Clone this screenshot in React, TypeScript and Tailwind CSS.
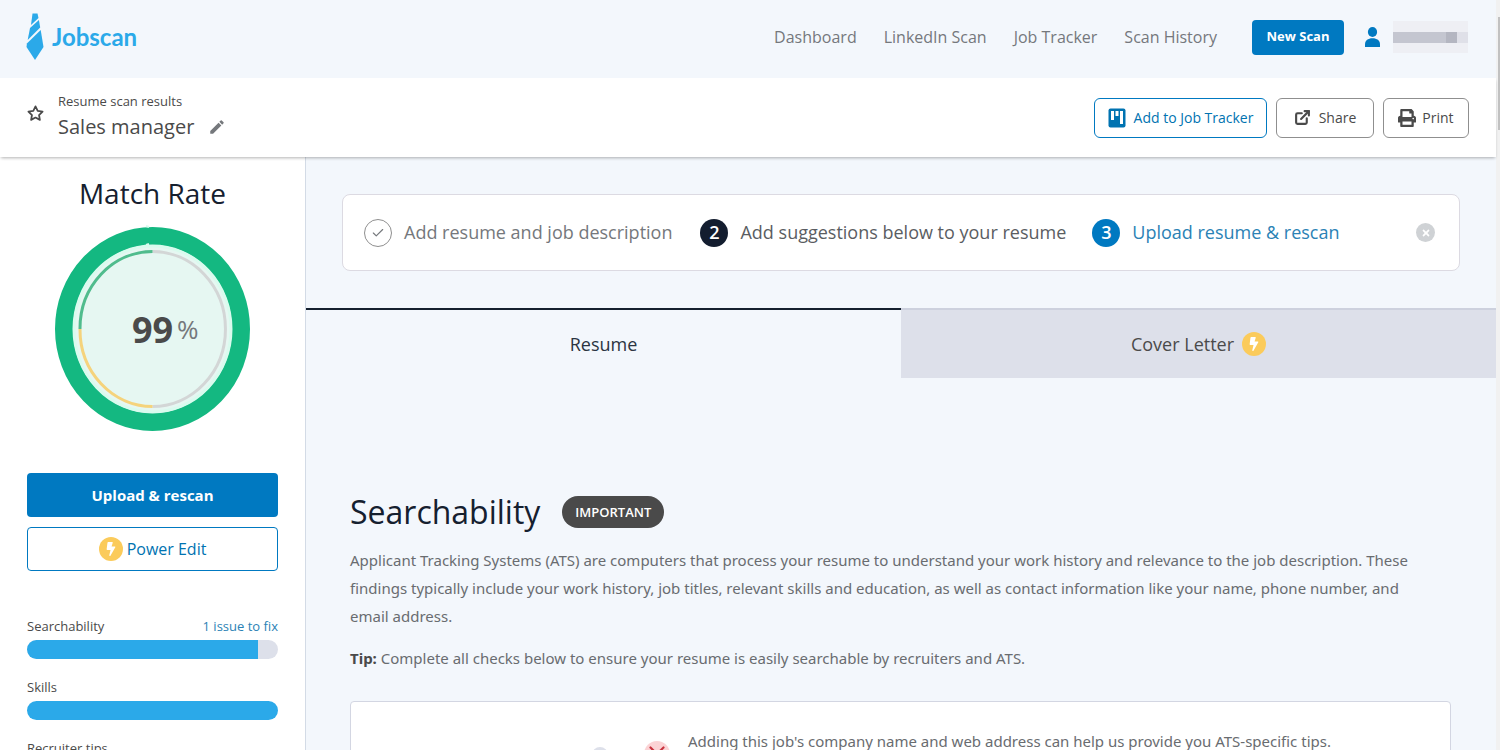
import React from 'react';
import { FaBolt, FaPrint, FaTimes } from 'react-icons/fa';
import { FiExternalLink, FiStar } from 'react-icons/fi';
import { MdModeEdit } from 'react-icons/md';
import { Check, X } from 'lucide-react';

interface Section {
  name: string;
  percent: number;
  note?: string;
}

const NAV_LINKS = ['Dashboard', 'LinkedIn Scan', 'Job Tracker', 'Scan History'];

const SECTIONS: Section[] = [
  { name: 'Searchability', percent: 92, note: '1 issue to fix' },
  { name: 'Skills', percent: 100 },
  { name: 'Recruiter tips', percent: 100 },
];

const Logo: React.FC = () => (
  <a href="#" className="flex items-center gap-2 text-[#2ba9e9]">
    <svg width="18" height="48" viewBox="0 0 18 48" fill="currentColor" aria-hidden="true">
      <path d="M6.500 0.500h5l1 4.500-7.500 7z" />
      <path d="M12.900 7l1.300 7.500L1.700 27l2.300-12z" />
      <path d="M14.700 17L17.500 34 9 47 0.500 34l0.400-3.500z" />
    </svg>
    <span className="font-['Lato'] text-[24px] font-bold leading-7">Jobscan</span>
  </a>
);

const BoltBadge: React.FC = () => (
  <span className="flex h-6 w-6 shrink-0 items-center justify-center rounded-full bg-[#fbcb5b] text-white">
    <FaBolt size={14} />
  </span>
);

const BoardIcon: React.FC = () => (
  <svg width="18" height="20" viewBox="0 0 18 20" aria-hidden="true">
    <rect x="0.500" y="0.500" width="17" height="19" rx="2" fill="#0073b1" />
    <path d="M3 3h3v9H3zM7.500 3h3v5h-3zM12 3h3v13h-3z" fill="#fff" />
  </svg>
);

const Header: React.FC = () => (
  <header className="flex h-[78px] shrink-0 items-center justify-between bg-[#f3f7fc] pl-[26px] pr-7 pb-1">
    <Logo />
    <div className="flex items-center">
      <nav className="flex gap-[27px] text-[16px] text-[#75787c]">
        {NAV_LINKS.map((link) => (
          <a key={link} href="#">{link}</a>
        ))}
      </nav>
      <button className="ml-[35px] h-[35px] w-[92px] rounded bg-[#0079c1] text-[13px] font-bold text-white">New Scan</button>
      <svg className="ml-5 text-[#0079c1]" width="17" height="20" viewBox="0 0 17 20" fill="currentColor" aria-hidden="true">
        <ellipse cx="8.500" cy="5" rx="4.600" ry="5" />
        <path d="M1 20V17.500C1 13.500 4 11.300 8.500 11.300s7.500 2.200 7.500 6.200V20z" />
      </svg>
      {/* Account name is redacted */}
      <div className="ml-3 flex h-8 w-[75px] flex-col justify-center bg-[#eeeff4]">
        <div className="flex h-[11px]">
          <div className="w-[53px] bg-[#c4c6d0]" />
          <div className="w-[11px] bg-[#b4b6c1]" />
          <div className="flex-1 bg-[#dfe0e8]" />
        </div>
      </div>
    </div>
  </header>
);

const TitleBar: React.FC = () => (
  <div className="relative z-10 flex h-[79px] shrink-0 items-center justify-between bg-white px-[27px] shadow-[0_2px_3px_-1px_rgba(0,0,0,0.3)]">
    <div className="flex items-center">
      <button aria-label="Favourite" className="mb-2 text-[#4a4a4a]">
        <FiStar size={17} strokeWidth={2.5} />
      </button>
      <div className="mb-0.5 ml-[14px] text-[#4a4a4a]">
        <p className="text-[13px] leading-5">Resume scan results</p>
        <div className="flex items-center gap-[14px]">
          <h1 className="text-[20px] leading-8">Sales manager</h1>
          <button aria-label="Edit title" className="text-[#75787c]">
            <MdModeEdit size={18} />
          </button>
        </div>
      </div>
    </div>
    <div className="flex gap-[9px] text-[14px] font-medium text-[#4a4a4a]">
      <button className="flex h-10 w-[173px] items-center justify-center gap-2 rounded-md border border-[#0079c1] text-[#0073b1]">
        <BoardIcon />
        Add to Job Tracker
      </button>
      <button className="flex h-10 w-[98px] items-center justify-center gap-2 rounded-md border border-[#8f8f8f]">
        <FiExternalLink size={17} strokeWidth={3} />
        Share
      </button>
      <button className="flex h-10 w-[86px] items-center justify-center gap-1.5 rounded-md border border-[#8f8f8f]">
        <FaPrint size={18} />
        Print
      </button>
    </div>
  </div>
);

const MatchGauge: React.FC = () => (
  <svg className="mx-auto mt-3" width="197" height="208" viewBox="0 0 197 208" role="img" aria-label="Match rate 99 percent">
    <ellipse cx="98.500" cy="104" rx="88.500" ry="93" fill="#e6f7f2" stroke="#14b881" strokeWidth="18" />
    <ellipse cx="98.500" cy="104" rx="78.500" ry="83" fill="#e6f7f2" stroke="#d9fbee" strokeWidth="3" />
    <path d="M98.500 26.500A72.500 77 0 0 1 98.500 181.500" fill="none" stroke="#d3d6d6" strokeWidth="3" />
    <path d="M98.500 181.500A72.500 77 0 0 1 26 104" fill="none" stroke="#f5d37c" strokeWidth="3" />
    <path d="M26 104A72.500 77 0 0 1 98.500 26.500" fill="none" stroke="#50bc8d" strokeWidth="3" />
    <path d="M92 1l3 1M92 20l3-1" stroke="#d9fbee" strokeWidth="2" />
    <text x="78" y="118" fill="#4a4a4a" fontSize="36" fontWeight="700">99</text>
    <text x="123" y="114" fill="#75787c" fontSize="26">%</text>
  </svg>
);

const Sidebar: React.FC = () => (
  <aside className="w-[306px] shrink-0 border-r border-[#d3dbe6] bg-white px-[27px] pt-4">
    <h2 className="text-center text-[28px] leading-10 text-[#15202f]">Match Rate</h2>
    <MatchGauge />
    <button className="mt-10 block h-11 w-full rounded bg-[#0079c1] text-[15px] font-bold text-white">Upload &amp; rescan</button>
    <button className="mt-[10px] flex h-11 w-full items-center justify-center gap-1 rounded border border-[#0079c1] text-[16px] font-medium text-[#0073b1]">
      <BoltBadge />
      Power Edit
    </button>
    <div className="mt-[45px] space-y-[18px]">
      {SECTIONS.map((section) => (
        <div key={section.name}>
          <div className="flex justify-between text-[13px] leading-5 text-[#4a4a4a]">
            <span>{section.name}</span>
            {section.note && <a href="#" className="text-[#2b82b5]">{section.note}</a>}
          </div>
          <div className="mt-1 h-[19px] overflow-hidden rounded-full bg-[#dde0ea]">
            <div className="h-full bg-[#2ba9e9]" style={{ width: `${section.percent}%` }} />
          </div>
        </div>
      ))}
    </div>
  </aside>
);

const Steps: React.FC = () => (
  <div className="mx-9 mt-[37px] flex h-[77px] items-center rounded-lg border border-[#dcdae2] bg-white pl-[21px] pr-6 text-[18px]">
    <div className="flex items-center gap-3 text-[#75787c]">
      <span className="flex h-7 w-7 items-center justify-center rounded-full border border-[#8f8f8f]">
        <Check size={14} />
      </span>
      Add resume and job description
    </div>
    <div className="ml-7 flex items-center gap-3 text-[#5a5d62]">
      <span className="flex h-7 w-7 items-center justify-center rounded-full bg-[#131d2f] font-semibold text-white">2</span>
      Add suggestions below to your resume
    </div>
    <a href="#" className="ml-[26px] flex items-center gap-3 text-[#2b82b5]">
      <span className="flex h-7 w-7 items-center justify-center rounded-full bg-[#0079c1] font-semibold text-white">3</span>
      Upload resume &amp; rescan
    </a>
    <button aria-label="Dismiss" className="ml-auto flex h-[19px] w-[19px] items-center justify-center rounded-full bg-[#cfd2d5] text-white">
      <FaTimes size={10} />
    </button>
  </div>
);

const Tabs: React.FC = () => (
  <div className="mt-[37px] grid h-[70px] grid-cols-2 text-[18px] font-medium">
    <button className="border-t-2 border-[#15202f] text-[#2b3441]">Resume</button>
    <button className="flex items-center justify-center gap-2 border-t-2 border-[#cdd1de] bg-[#dde0ea] text-[#4a4a4a]">
      Cover Letter
      <BoltBadge />
    </button>
  </div>
);

const Searchability: React.FC = () => (
  <section className="mt-[112px] pl-[44px] pr-[45px] font-['Noto_Sans'] text-[15px] leading-7 text-[#696c70]">
    <div className="flex items-center gap-[22px] font-['Open_Sans']">
      <h2 className="text-[32px] font-medium leading-[44px] text-[#15202f]">Searchability</h2>
      <span className="flex h-8 items-center rounded-full bg-[#4a4a4a] px-[13px] text-[13px] font-semibold text-white">IMPORTANT</span>
    </div>
    <p className="mt-3 pr-6">
      Applicant Tracking Systems (ATS) are computers that process your resume to understand your work history and relevance to the job description. These findings typically include your work history, job titles, relevant skills and education, as well as contact information like your name, phone number, and email address.
    </p>
    <p className="mt-[14px]">
      <strong className="text-[#4a4a4a]">Tip:</strong> Complete all checks below to ensure your resume is easily searchable by recruiters and ATS.
    </p>
    <div className="mt-[29px] flex rounded border border-[#d3d6e2] bg-white pb-8 pl-5 pr-10 pt-[25px]">
      <h3 className="mt-[17px] w-[221px] font-['Open_Sans'] text-[17px] font-bold leading-7 text-[#4a4a4a]">ATS Tip</h3>
      <span className="mt-5 h-4 w-4 shrink-0 rounded-full bg-[#dde0ea]" />
      <span className="ml-9 mr-[18px] mt-[14px] flex h-[26px] w-[26px] shrink-0 items-center justify-center rounded-full bg-[#fbd3d5] text-[#c8313d]">
        <X size={26} />
      </span>
      <p>Adding this job's company name and web address can help us provide you ATS-specific tips.</p>
    </div>
  </section>
);

const App: React.FC = () => {
  return (
    <div className="flex h-screen overflow-hidden bg-[#f3f7fc] font-['Open_Sans',sans-serif]">
      <div className="flex min-w-0 flex-1 flex-col">
        <Header />
        <TitleBar />
        <div className="flex min-h-0 flex-1">
          <Sidebar />
          <main className="min-w-0 flex-1">
            <Steps />
            <Tabs />
            <Searchability />
          </main>
        </div>
      </div>
      <div className="w-1 shrink-0 bg-[#f1f1f1] pl-0.5 pt-[17px]">
        <div className="h-[113px] bg-[#c1c1c1]" />
      </div>
    </div>
  );
};

export default App;
